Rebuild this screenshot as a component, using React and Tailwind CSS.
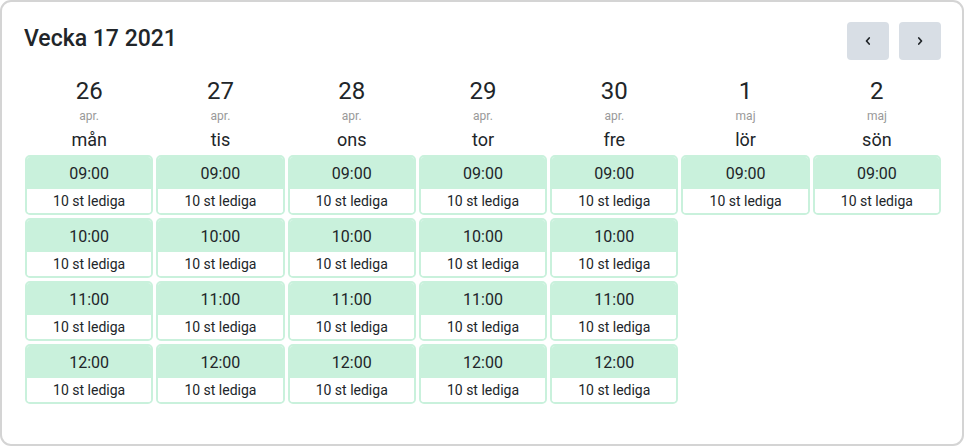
const days = [
  { num: "26", month: "apr.", name: "mån", slots: ["09:00", "10:00", "11:00", "12:00"] },
  { num: "27", month: "apr.", name: "tis", slots: ["09:00", "10:00", "11:00", "12:00"] },
  { num: "28", month: "apr.", name: "ons", slots: ["09:00", "10:00", "11:00", "12:00"] },
  { num: "29", month: "apr.", name: "tor", slots: ["09:00", "10:00", "11:00", "12:00"] },
  { num: "30", month: "apr.", name: "fre", slots: ["09:00", "10:00", "11:00", "12:00"] },
  { num: "1", month: "maj", name: "lör", slots: ["09:00"] },
  { num: "2", month: "maj", name: "sön", slots: ["09:00"] },
];

function Chevron({ dir }) {
  return (
    <svg width="8" height="10" viewBox="0 0 8 10" fill="none">
      <path
        d={dir === "left" ? "M5.2 2 L2.5 5 L5.2 8" : "M2.8 2 L5.5 5 L2.8 8"}
        stroke="#212529"
        strokeWidth="1.7"
        strokeLinecap="round"
        strokeLinejoin="round"
      />
    </svg>
  );
}

function Slot({ time }) {
  return (
    <button className="flex flex-col w-full border-2 border-[#c9f1dc] rounded-[5px] overflow-hidden">
      <div className="h-[32px] leading-[34px] bg-[#c9f1dc] text-[16px] text-[#212529] text-center">
        {time}
      </div>
      <div className="h-[24px] leading-[24px] bg-white text-[14px] text-[#212529] text-center">
        10 st lediga
      </div>
    </button>
  );
}

export default function App() {
  return (
    <div
      className="w-[964px] h-[446px] bg-white border-2 border-[#d4d4d4] rounded-[11px] pt-[20px] pl-[23px] pr-[21px]"
      style={{ fontFamily: "Roboto, 'Noto Sans', sans-serif" }}
    >
      <div className="flex items-start justify-between h-[38px]">
        <h1 className="text-[23px] font-medium text-[#212529] leading-[34px] -ml-[1px]">
          Vecka 17 2021
        </h1>
        <div className="flex gap-[10px]">
          <button className="w-[42px] h-[38px] bg-[#d8dee5] rounded-[4px] flex items-center justify-center">
            <Chevron dir="left" />
          </button>
          <button className="w-[42px] h-[38px] bg-[#d8dee5] rounded-[4px] flex items-center justify-center">
            <Chevron dir="right" />
          </button>
        </div>
      </div>
      <div className="grid grid-cols-7 gap-x-[3px] mt-[17px]">
        {days.map((d) => (
          <div key={d.num} className="flex flex-col">
            <div className="text-center text-[24px] leading-[28px] text-[#212529]">{d.num}</div>
            <div className="text-center text-[12px] leading-[14px] text-[#999999] mt-[4px]">
              {d.month}
            </div>
            <div className="text-center text-[18px] leading-[22px] text-[#212529] mt-[6px]">
              {d.name}
            </div>
            <div className="flex flex-col gap-[3px] mt-[4px]">
              {d.slots.map((t) => (
                <Slot key={t} time={t} />
              ))}
            </div>
          </div>
        ))}
      </div>
    </div>
  );
}
